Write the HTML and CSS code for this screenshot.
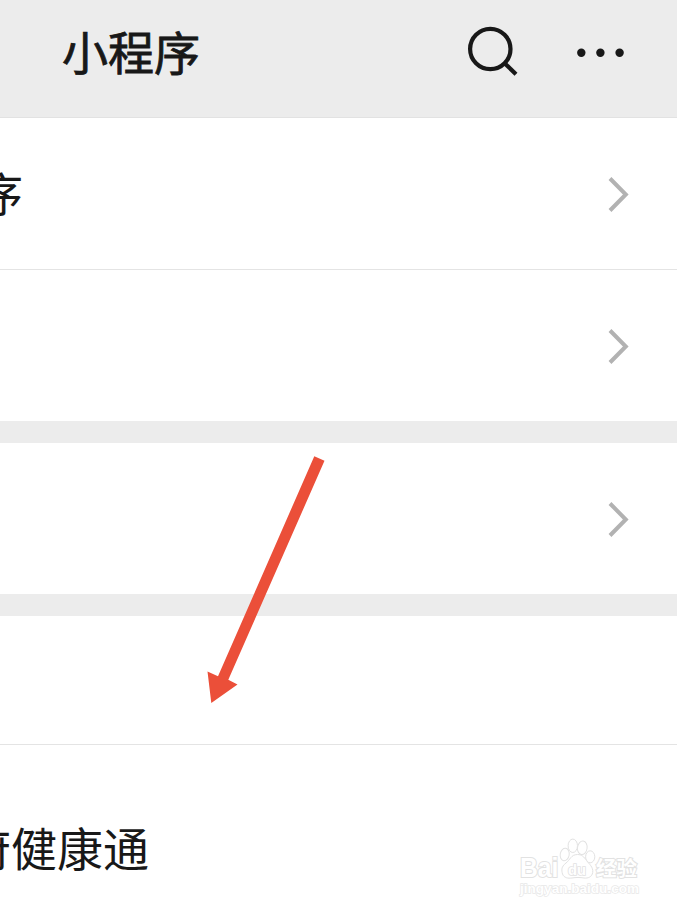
FILE: index.html
```
<!DOCTYPE html>
<html lang="zh-CN">
<head>
    <meta charset="UTF-8">
    <meta name="viewport" content="width=device-width, initial-scale=1.0">
    <title>小程序</title>
    <link rel="stylesheet" href="styles.css">
</head>
<body>
    <div class="page">
        <header class="header">
            <h1>小程序</h1>
            <div class="header-actions">
                <svg class="search-icon" width="52" height="52" viewBox="0 0 52 52">
                    <circle cx="24.3" cy="24" r="20.2"/>
                    <path d="M37.8 37.5L50 49.2"/>
                </svg>
                <svg class="more-icon" width="48" height="10" viewBox="0 0 48 10">
                    <circle cx="5.3" cy="4.7" r="4.2"/>
                    <circle cx="24.4" cy="4.7" r="4.2"/>
                    <circle cx="43.6" cy="4.7" r="4.2"/>
                </svg>
            </div>
        </header>

        <main>
            <div class="row divider">
                <span class="row-label label-mini">序</span>
                <svg class="chevron" width="22" height="36" viewBox="0 0 22 36"><path d="M3 2.5L18.8 18.5L3 34.5"/></svg>
            </div>
            <div class="row">
                <svg class="chevron" width="22" height="36" viewBox="0 0 22 36"><path d="M3 2.5L18.8 18.5L3 34.5"/></svg>
            </div>
            <div class="row group">
                <svg class="chevron" width="22" height="36" viewBox="0 0 22 36"><path d="M3 2.5L18.8 18.5L3 34.5"/></svg>
            </div>
            <div class="row group section-title divider"></div>
            <div class="row last">
                <span class="row-label label-health">府健康通</span>
            </div>
        </main>

        <svg class="arrow" width="120" height="252" viewBox="0 0 120 252">
            <path d="M114.3 6.2L124.5 10.8L28.3 229.7L37.5 234.5L11.3 253L7.5 221.5L18 226.3Z"/>
        </svg>

        <svg class="watermark" width="130" height="66" viewBox="0 0 130 66">
            <g class="paw">
                <ellipse cx="48.7" cy="19.5" rx="4.5" ry="6.3" transform="rotate(10 48.7 19.5)"/>
                <ellipse cx="56.8" cy="10.8" rx="4.7" ry="6.7"/>
                <ellipse cx="66.3" cy="12.8" rx="4.8" ry="6.8" transform="rotate(8 66.3 12.8)"/>
                <ellipse cx="74.2" cy="21.8" rx="4.6" ry="6"/>
                <path d="M61.5 19.5C55 19.5 54 25 50 28C45 32 45.5 35 46.5 39C48 43 52 43.5 56 43C60 42.3 64 42.3 68 43C72 43.5 76 42 76.7 37.5C77.5 32 73 29 70.5 25.5C68 22 66 19.5 61.5 19.5Z"/>
            </g>
            <text class="wm-latin" x="4" y="42" textLength="38.5" lengthAdjust="spacingAndGlyphs">Bai</text>
            <text class="wm-du" x="52" y="39.5" textLength="18" lengthAdjust="spacingAndGlyphs">du</text>
            <text class="wm-cjk" x="80" y="40.5">经验</text>
            <text class="wm-url" x="4" y="57.5" textLength="119" lengthAdjust="spacingAndGlyphs">jingyan.baidu.com</text>
        </svg>
    </div>
</body>
</html>
```
FILE: styles.css
```
* {
    margin: 0;
    padding: 0;
    box-sizing: border-box;
}
body {
    font-family: "Noto Sans CJK SC", sans-serif;
    background-color: #fff;
    color: #181818;
    overflow: hidden;
}
.page {
    position: relative;
    height: 912px;
    overflow: hidden;
}
.header {
    display: flex;
    justify-content: space-between;
    height: 118px;
    padding: 0 53px 0 62px;
    background-color: #ececec;
    border-bottom: 1px solid #e2e2e2;
}
h1 {
    height: 100px;
    font-size: 46px;
    font-weight: 400;
    line-height: 100px;
    -webkit-text-stroke: 0.8px #181818;
}
.header-actions {
    display: flex;
    align-items: center;
    gap: 58px;
    height: 102px;
}
.search-icon {
    fill: none;
    stroke: #181818;
    stroke-width: 4.2;
}
.more-icon {
    margin-top: 3px;
    fill: #181818;
}
.row {
    display: flex;
    align-items: center;
    height: 151px;
    padding-right: 48px;
    background-color: #fff;
}
.divider {
    height: 152px;
    border-bottom: 1px solid #e4e4e4;
}
.group {
    height: 173px;
    border-top: 22px solid #ececec;
}
.section-title {
    height: 151px;
}
.last {
    height: 167px;
    align-items: flex-start;
}
.row-label {
    font-size: 46px;
    line-height: 68px;
    white-space: nowrap;
}
.label-mini {
    margin-top: -6px;
    margin-left: -23px;
}
.label-health {
    margin-top: 67px;
    margin-left: -35px;
}
.chevron {
    margin-left: auto;
    fill: none;
    stroke: #b2b2b2;
    stroke-width: 4;
}
.arrow {
    position: absolute;
    top: 450px;
    left: 200px;
    overflow: visible;
    fill: #eb4f39;
}
.watermark {
    position: absolute;
    top: 835px;
    left: 516px;
    fill: #fff;
    stroke: #e2e2e2;
    stroke-width: 1;
}
.watermark text {
    font-family: "Liberation Sans", "Noto Sans CJK SC", sans-serif;
    font-weight: bold;
    paint-order: stroke;
    stroke-width: 2;
}
.wm-latin {
    font-size: 27px;
}
.watermark .wm-du {
    font-size: 15px;
    stroke-width: 1.6;
}
.wm-cjk {
    font-size: 20.5px;
}
.watermark .wm-url {
    font-size: 13px;
    stroke: #e8e8e8;
    stroke-width: 1.4;
}
```
